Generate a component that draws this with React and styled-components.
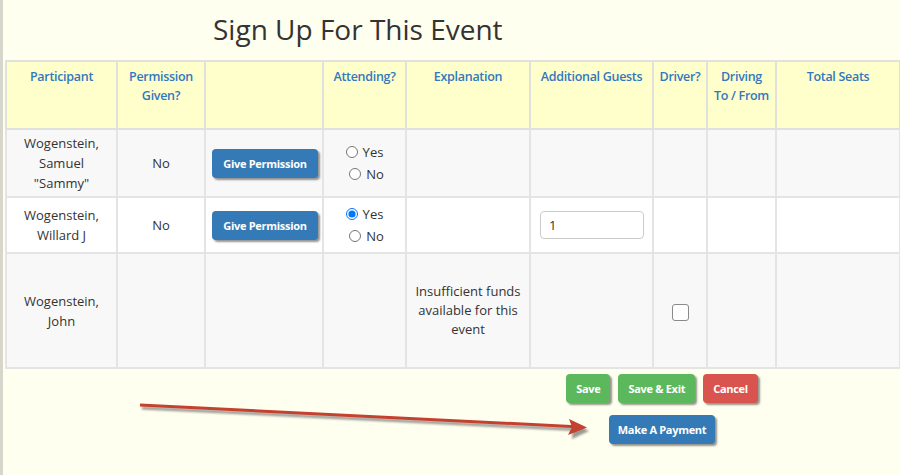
import React from "react";
import styled, { createGlobalStyle } from "styled-components";

const Global = createGlobalStyle`
  html, body { margin: 0; padding: 0; background: #fffff0; }
  body { font-family: "Open Sans", "DejaVu Sans", sans-serif; color: #333; }
`;

const Page = styled.div`
  position: relative;
  width: 900px;
  height: 475px;
  overflow: hidden;
  box-sizing: border-box;
  border-left: 3px solid #d6d6cc;
  padding-left: 2px;
  background: #fffff0;
`;

const Title = styled.h1`
  margin: 0;
  padding: 11px 0 0 208px;
  height: 60px;
  box-sizing: border-box;
  font-size: 28px;
  font-weight: 400;
  color: #333;
  line-height: 36px;
`;

const Table = styled.table`
  border-collapse: collapse;
  table-layout: fixed;
  width: 894px;
  font-size: 13px;
  line-height: 20px;
`;

const Th = styled.th`
  border: 2px solid #e0e0dc;
  background: #ffffcc;
  color: #3278be;
  font-weight: 600;
  font-size: 12.5px;
  letter-spacing: -0.3px;
  line-height: 19px;
  vertical-align: top;
  text-align: center;
  padding: 5px 2px 0;
  height: 68px;
  box-sizing: border-box;
`;

const Tr = styled.tr`
  background: ${(p) => (p.$alt ? "#f8f8f8" : "#ffffff")};
  height: ${(p) => p.$h}px;
`;

const Td = styled.td`
  border: 2px solid #e4e4e4;
  text-align: ${(p) => (p.$left ? "left" : "center")};
  vertical-align: middle;
  padding: 0 ${(p) => (p.$left ? "8px" : "6px")};
  color: #333;
`;

const Btn = styled.button`
  border: none;
  border-radius: 4px;
  color: #fff;
  font-family: inherit;
  font-weight: 700;
  font-size: 11px;
  letter-spacing: -0.3px;
  height: 29px;
  padding: 0 ${(p) => p.$px || 10}px;
  background: ${(p) => p.$bg};
  box-shadow: 2px 2px 2px rgba(60, 60, 60, 0.55);
  cursor: pointer;
`;

const PermBtn = styled(Btn)`
  width: 106px;
  padding: 0;
`;

const RadioGroup = styled.div`
  display: flex;
  flex-direction: column;
  align-items: center;
  line-height: 22px;
`;

const RadioLabel = styled.label`
  display: flex;
  align-items: center;
  gap: 5px;
  font-size: 13px;
  margin-left: ${(p) => p.$ml || 0}px;
`;

const Radio = styled.input.attrs({ type: "radio" })`
  margin: 0;
  width: 12px;
  height: 12px;
`;

const GuestInput = styled.input`
  width: 104px;
  height: 28px;
  box-sizing: border-box;
  border: 1px solid #ccc;
  border-radius: 4px;
  padding: 0 8px;
  font-family: inherit;
  font-size: 13px;
  color: #333;
  background: #fff;
  display: block;
  margin-left: 1px;
`;

const Check = styled.span`
  display: inline-block;
  width: 15px;
  height: 15px;
  border: 1px solid #8a8a8a;
  border-radius: 3px;
  background: #fff;
  vertical-align: middle;
`;

const Actions = styled.div`
  display: flex;
  flex-direction: column;
  align-items: center;
  gap: 12px;
  padding: 5px 0 0 420px;
  width: 894px;
  box-sizing: border-box;
`;

const ButtonRow = styled.div`
  display: flex;
  gap: 8px;
`;

const Arrow = styled.svg`
  position: absolute;
  left: 0;
  top: 0;
  pointer-events: none;
`;

const cols = [111, 88, 118, 83, 124, 123, 54, 69, 124];

export default function App() {
  return (
    <>
      <Global />
      <Page>
        <Title>Sign Up For This Event</Title>
        <Table>
          <colgroup>
            {cols.map((w, i) => (
              <col key={i} style={{ width: w }} />
            ))}
          </colgroup>
          <thead>
            <tr>
              <Th>Participant</Th>
              <Th>Permission Given?</Th>
              <Th></Th>
              <Th>Attending?</Th>
              <Th>Explanation</Th>
              <Th>Additional Guests</Th>
              <Th>Driver?</Th>
              <Th>
                Driving
                <br />
                To / From
              </Th>
              <Th>Total Seats</Th>
            </tr>
          </thead>
          <tbody>
            <Tr $alt $h={68}>
              <Td>
                Wogenstein,
                <br />
                Samuel
                <br />
                "Sammy"
              </Td>
              <Td>No</Td>
              <Td $left style={{ paddingLeft: 6 }}>
                <PermBtn $bg="#337ab7">Give Permission</PermBtn>
              </Td>
              <Td>
                <RadioGroup>
                  <RadioLabel>
                    <Radio name="a1" /> Yes
                  </RadioLabel>
                  <RadioLabel $ml={4}>
                    <Radio name="a1" /> No
                  </RadioLabel>
                </RadioGroup>
              </Td>
              <Td></Td>
              <Td></Td>
              <Td></Td>
              <Td></Td>
              <Td></Td>
            </Tr>
            <Tr $h={56}>
              <Td>
                Wogenstein,
                <br />
                Willard J
              </Td>
              <Td>No</Td>
              <Td $left style={{ paddingLeft: 6 }}>
                <PermBtn $bg="#337ab7">Give Permission</PermBtn>
              </Td>
              <Td>
                <RadioGroup>
                  <RadioLabel>
                    <Radio name="a2" defaultChecked /> Yes
                  </RadioLabel>
                  <RadioLabel $ml={4}>
                    <Radio name="a2" /> No
                  </RadioLabel>
                </RadioGroup>
              </Td>
              <Td></Td>
              <Td $left>
                <GuestInput defaultValue="1" />
              </Td>
              <Td></Td>
              <Td></Td>
              <Td></Td>
            </Tr>
            <Tr $alt $h={115}>
              <Td>
                Wogenstein,
                <br />
                John
              </Td>
              <Td></Td>
              <Td></Td>
              <Td></Td>
              <Td style={{ lineHeight: "19px" }}>
                Insufficient funds available for this event
              </Td>
              <Td></Td>
              <Td>
                <Check />
              </Td>
              <Td></Td>
              <Td></Td>
            </Tr>
          </tbody>
        </Table>
        <Actions>
          <ButtonRow>
            <Btn $bg="#5cb85c" $px={10}>Save</Btn>
            <Btn $bg="#5cb85c" $px={10}>Save &amp; Exit</Btn>
            <Btn $bg="#d9534f" $px={10}>Cancel</Btn>
          </ButtonRow>
          <Btn $bg="#337ab7" $px={9}>Make A Payment</Btn>
        </Actions>
        <Arrow width="900" height="475" viewBox="0 0 900 475">
          <defs>
            <filter id="sh" x="-10%" y="-200%" width="120%" height="500%">
              <feGaussianBlur stdDeviation="1.2" />
            </filter>
          </defs>
          <g opacity="0.6" filter="url(#sh)">
            <g transform="translate(2,3)">
              <line x1="137" y1="405" x2="580" y2="427" stroke="#555" strokeWidth="3" />
              <path d="M568 420 L584 428 L567 436 Z" fill="#555" />
            </g>
          </g>
          <line x1="137" y1="405" x2="578" y2="427" stroke="#c4412f" strokeWidth="3" />
          <path d="M566 419 L584 427.5 L565 435 L569 427 Z" fill="#c4412f" />
        </Arrow>
      </Page>
    </>
  );
}
